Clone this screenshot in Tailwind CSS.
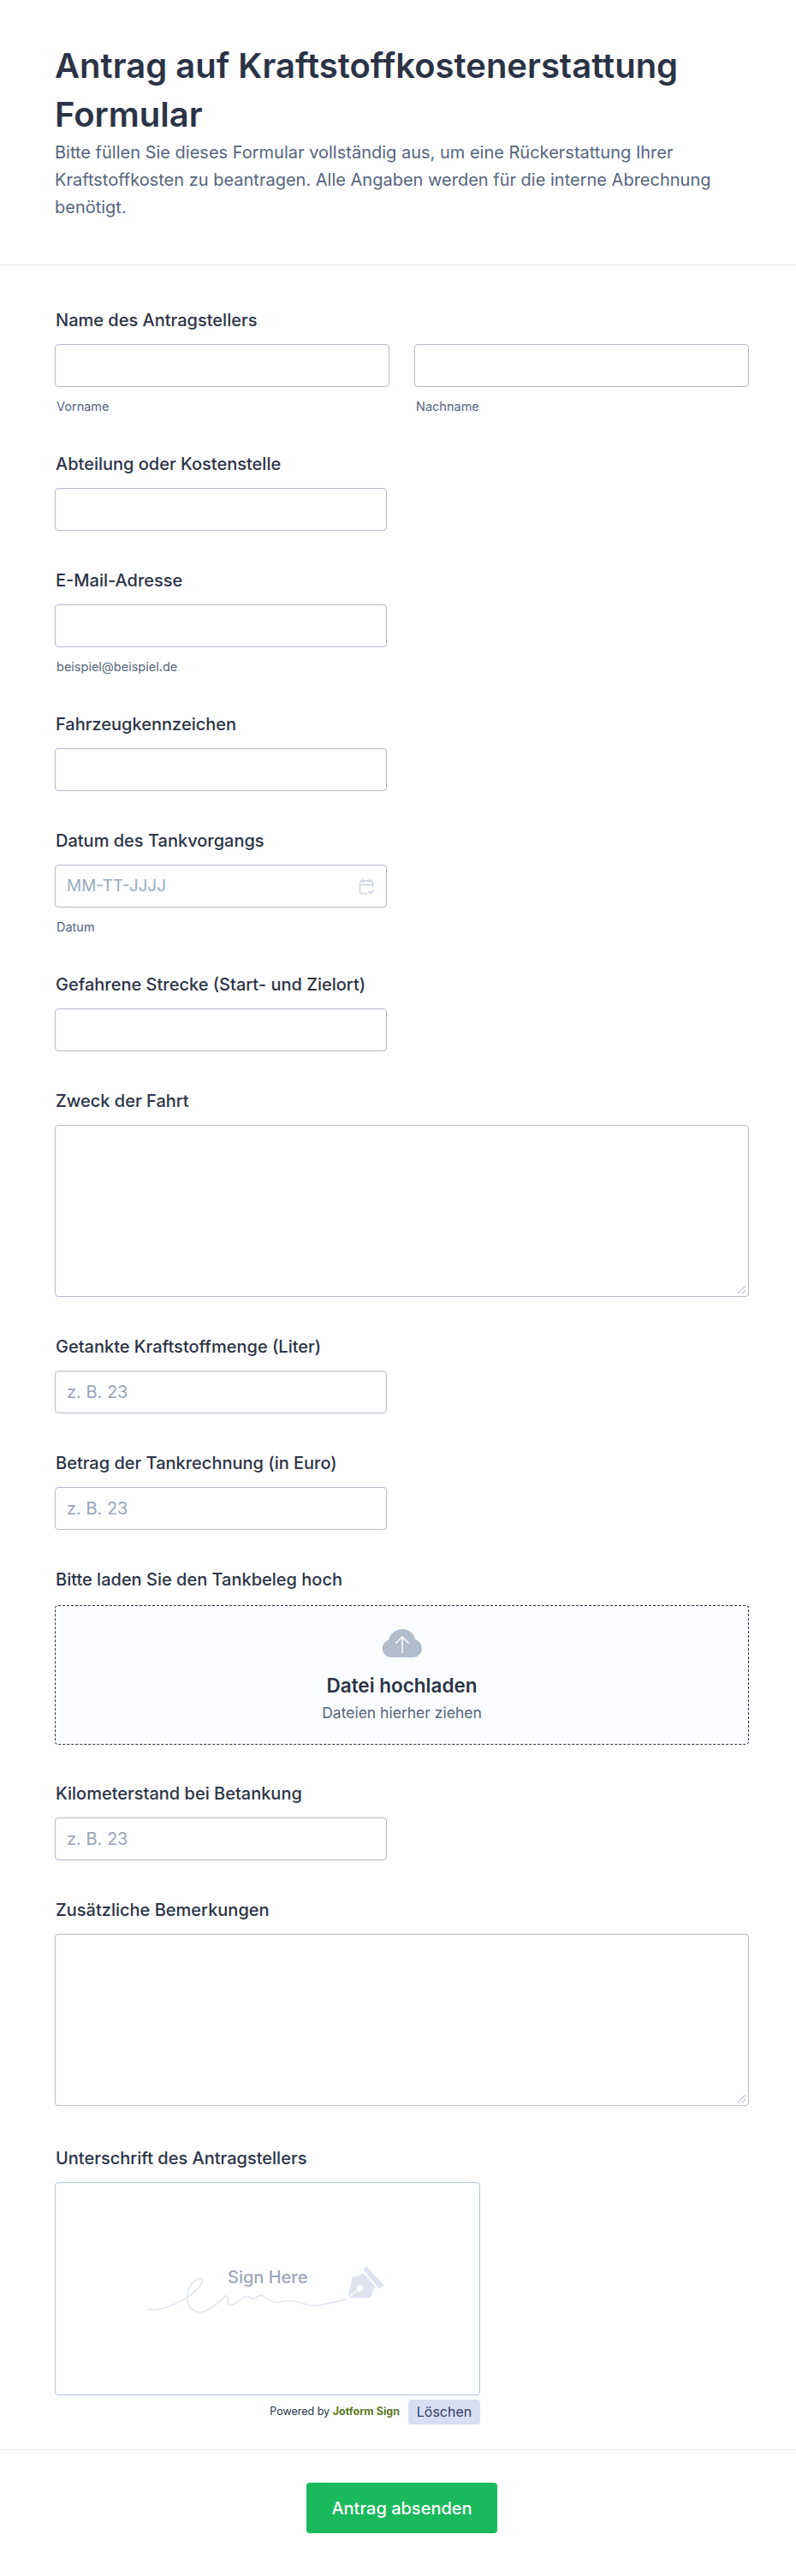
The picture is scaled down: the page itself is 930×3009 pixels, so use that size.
<!DOCTYPE html>
<html lang="de">
<head>
<meta charset="UTF-8">
<title>Antrag auf Kraftstoffkostenerstattung Formular</title>
<script src="https://cdn.jsdelivr.net/npm/@tailwindcss/browser@4"></script>
</head>
<body class="bg-white font-['Inter',sans-serif] text-[#2c3345]">
<div class="w-[930px] h-[3009px] overflow-hidden">
  <!-- Header -->
  <header class="h-[310px] border-b border-[#e3e5f0] pl-[64px] pr-[55px] pt-[48px]">
    <h1 class="text-[40px] leading-[57px] font-semibold text-[#2c3345]">Antrag auf Kraftstoffkostenerstattung Formular</h1>
    <p class="text-[20px] leading-[32px] text-[#57647e] w-[800px]">Bitte füllen Sie dieses Formular vollständig aus, um eine Rückerstattung Ihrer Kraftstoffkosten zu beantragen. Alle Angaben werden für die interne Abrechnung benötigt.</p>
  </header>

  <main class="pl-[64px] pr-[55px] pt-[52px]">
    <label class="block text-[20px] leading-[24px] font-medium ml-[1px] mb-[16px]">Name des Antragstellers</label>
    <div class="flex gap-[29px]">
      <div class="w-[391px]"><div class="h-[50px] border border-[#b4bacb] rounded-[4px]"></div><p class="text-[14.5px] leading-[20px] mt-[13px] ml-[2px] text-[#57647e]">Vorname</p></div>
      <div class="w-[391px]"><div class="h-[50px] border border-[#b4bacb] rounded-[4px]"></div><p class="text-[14.5px] leading-[20px] mt-[13px] ml-[2px] text-[#57647e]">Nachname</p></div>
    </div>

    <label class="block text-[20px] leading-[24px] font-medium ml-[1px] mt-[45px] mb-[16px]">Abteilung oder Kostenstelle</label>
    <div class="w-[388px] h-[50px] border border-[#b4bacb] rounded-[4px]"></div>

    <label class="block text-[20px] leading-[24px] font-medium ml-[1px] mt-[46px] mb-[16px]">E-Mail-Adresse</label>
    <div class="w-[388px] h-[50px] border border-[#b4bacb] rounded-[4px]"></div>
    <p class="text-[14.5px] leading-[20px] mt-[13px] ml-[2px] text-[#57647e]">beispiel@beispiel.de</p>

    <label class="block text-[20px] leading-[24px] font-medium ml-[1px] mt-[45px] mb-[16px]">Fahrzeugkennzeichen</label>
    <div class="w-[388px] h-[50px] border border-[#b4bacb] rounded-[4px]"></div>

    <label class="block text-[20px] leading-[24px] font-medium ml-[1px] mt-[46px] mb-[16px]">Datum des Tankvorgangs</label>
    <div class="w-[388px] h-[50px] border border-[#b4bacb] rounded-[4px] flex items-center justify-between pl-[13px] pr-[14px] text-[19px] text-[#9aaac0]">MM-TT-JJJJ
      <svg width="18" height="19" viewBox="0 0 18 19" fill="none" stroke="#cdd1dd" stroke-width="1.5" stroke-linecap="round" stroke-linejoin="round"><path d="M16.500 9.500V5a2 2 0 0 0-2-2h-11a2 2 0 0 0-2 2v11a2 2 0 0 0 2 2h6M1.500 7.500h15M5 1v3.500M13 1v3.500M11.500 15.500l2 2 3.500-3.500"/></svg>
    </div>
    <p class="text-[14.5px] leading-[20px] mt-[13px] ml-[2px] text-[#57647e]">Datum</p>

    <label class="block text-[20px] leading-[24px] font-medium ml-[1px] mt-[45px] mb-[16px]">Gefahrene Strecke (Start- und Zielort)</label>
    <div class="w-[388px] h-[50px] border border-[#b4bacb] rounded-[4px]"></div>

    <label class="block text-[20px] leading-[24px] font-medium ml-[1px] mt-[46px] mb-[16px]">Zweck der Fahrt</label>
    <div class="relative w-[811px] h-[201px] border border-[#b4bacb] rounded-[4px]">
      <svg class="absolute right-[2px] bottom-[2px]" width="11" height="11" viewBox="0 0 11 11" fill="none" stroke="#c3c8d6" stroke-width="1.200"><path d="M1 10 10 1M6 10l4-4"/></svg>
    </div>

    <label class="block text-[20px] leading-[24px] font-medium ml-[1px] mt-[46px] mb-[16px]">Getankte Kraftstoffmenge (Liter)</label>
    <div class="w-[388px] h-[50px] border border-[#b4bacb] rounded-[4px] flex items-center pl-[13px] text-[20px] text-[#9aa5b8]">z. B. 23</div>

    <label class="block text-[20px] leading-[24px] font-medium ml-[1px] mt-[46px] mb-[16px]">Betrag der Tankrechnung (in Euro)</label>
    <div class="w-[388px] h-[50px] border border-[#b4bacb] rounded-[4px] flex items-center pl-[13px] text-[20px] text-[#9aa5b8]">z. B. 23</div>

    <label class="block text-[20px] leading-[24px] font-medium ml-[1px] mt-[46px] mb-[18px]">Bitte laden Sie den Tankbeleg hoch</label>
    <div class="w-[811px] h-[163px] border border-dashed border-[#2c3345] rounded-[4px] bg-[#fbfcff] flex flex-col items-center pt-[27px]">
      <svg width="48" height="33" viewBox="0 0 48 33"><path d="M11 33A10.500 10.500 0 0 1 8 12.500 16 16 0 0 1 24 0a15 15 0 0 1 15 12 10.800 10.800 0 0 1-1 21z" fill="#b1bccd"/><path d="M24 28V9M16.500 16.500 24 9l7.500 7.500" fill="none" stroke="#fbfcff" stroke-width="1.500"/></svg>
      <p class="text-[22.5px] leading-[30px] font-semibold mt-[18px]">Datei hochladen</p>
      <p class="text-[17.5px] leading-[24px] mt-[5px] text-[#57647e]">Dateien hierher ziehen</p>
    </div>

    <label class="block text-[20px] leading-[24px] font-medium ml-[1px] mt-[45px] mb-[16px]">Kilometerstand bei Betankung</label>
    <div class="w-[388px] h-[50px] border border-[#b4bacb] rounded-[4px] flex items-center pl-[13px] text-[20px] text-[#9aa5b8]">z. B. 23</div>

    <label class="block text-[20px] leading-[24px] font-medium ml-[1px] mt-[46px] mb-[16px]">Zusätzliche Bemerkungen</label>
    <div class="relative w-[811px] h-[201px] border border-[#b4bacb] rounded-[4px]">
      <svg class="absolute right-[2px] bottom-[2px]" width="11" height="11" viewBox="0 0 11 11" fill="none" stroke="#c3c8d6" stroke-width="1.200"><path d="M1 10 10 1M6 10l4-4"/></svg>
    </div>

    <label class="block text-[20px] leading-[24px] font-medium ml-[1px] mt-[49px] mb-[16px]">Unterschrift des Antragstellers</label>
    <div class="relative w-[497px] h-[249px] border border-[#b3c2de] rounded-[4px]">
      <svg class="absolute left-[103px] top-[93px]" width="284" height="62" viewBox="350 340 840 185" fill="none">
        <path d="M358 502C400 512 450 490 497 462 530 440 555 410 550 398 540 385 505 410 497 455 495 495 520 515 550 512 590 505 620 460 635 455 650 460 625 490 650 488 680 480 695 450 715 460 730 480 740 450 760 455 785 470 800 485 830 475 850 470 880 475 910 485 930 495 960 490 1000 480L1052 468" stroke="#e3e6f1" stroke-width="5" stroke-linecap="round"/>
        <path d="M1057 464 1073 392 1113 378 1152 422 1136 462Z" fill="#dfe3f0"/>
        <path d="M1122 352 1184 420 1168 430 1112 366Z" fill="#dfe3f0"/>
        <path d="M1057 464 1092 436" stroke="#fff" stroke-width="4"/>
        <circle cx="1100" cy="430" r="11" fill="#fff"/>
      </svg>
      <span class="absolute left-[201px] top-[98px] text-[20px] leading-[24px] font-medium text-[#9fa7bb]">Sign Here</span>
    </div>
    <div class="w-[497px] flex justify-end items-center gap-[10px] mt-[5px]">
      <span class="text-[12.500px] text-[#2c3345]">Powered by <b class="font-bold text-[#5b7a1e]">Jotform Sign</b></span>
      <span class="w-[84px] h-[29px] text-center bg-[#d8dff3] rounded-[4px] text-[16px] leading-[29px] text-[#2f3d6e]">Löschen</span>
    </div>
  </main>

  <footer class="mt-[29px] border-t border-[#ebecf5] pl-[64px] pr-[55px] pt-[38px] flex justify-center">
    <div class="w-[223px] h-[59px] rounded-[4px] bg-[#1aba5c] text-white text-[20px] font-medium flex items-center justify-center">Antrag absenden</div>
  </footer>
</div>
</body>
</html>
